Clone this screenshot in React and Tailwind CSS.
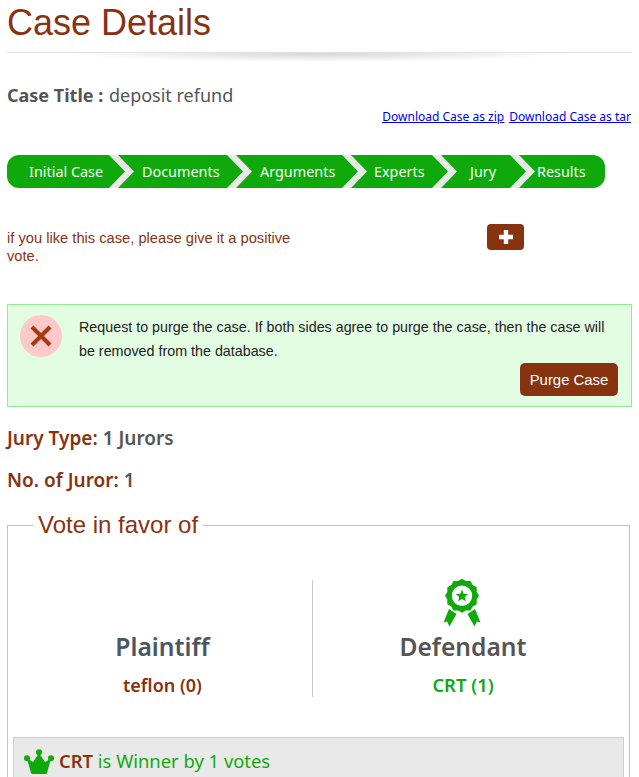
const steps = [
  { label: 'Initial Case', w: 'w-[102px]', pl: 'pl-[22px]' },
  { label: 'Documents', w: 'w-[93px]', pl: 'pl-[8px]' },
  { label: 'Arguments', w: 'w-[90px]', pl: 'pl-[8px]' },
  { label: 'Experts', w: 'w-[65px]', pl: 'pl-[7px]' },
  { label: 'Jury', w: 'w-[53px]', pl: 'pl-[13px]' },
  { label: 'Results', w: 'w-[70px]', pl: 'pl-[2px]' },
];

const Chevron = () => (
  <svg width="25" height="33" viewBox="0 0 25 33" className="block shrink-0">
    <polygon points="0,0 25,16.5 0,33" fill="#0fa90c" />
    <polygon points="0,0 9,0 25,16.5 9,33 0,33 16,16.5" fill="#e8e8e8" />
  </svg>
);

// scalloped rosette with a star and two ribbon tails
const scallop = Array.from({ length: 24 }, (_, i) => {
  const a = (i * Math.PI) / 12;
  const r = i % 2 ? 15.2 : 17;
  return `${(26 + r * Math.sin(a)).toFixed(1)},${(21.7 - r * Math.cos(a)).toFixed(1)}`;
}).join(' ');

const star = Array.from({ length: 10 }, (_, i) => {
  const a = (i * Math.PI) / 5;
  const r = i % 2 ? 2.9 : 6.4;
  return `${(26 + r * Math.sin(a)).toFixed(1)},${(22 - r * Math.cos(a)).toFixed(1)}`;
}).join(' ');

const Award = ({ className }) => (
  <svg width="54" height="60" viewBox="0 0 54 60" className={className}>
    <polygon points="13,35 20.500,40 13.500,52.500 11,47.500 7.500,48.500" fill="#0fa90c" />
    <polygon points="39,35 31.500,40 38.500,52.500 41,47.500 44.500,48.500" fill="#0fa90c" />
    <polygon points={scallop} fill="#0fa90c" />
    <circle cx="26" cy="21.7" r="10.2" fill="#fff" />
    <polygon points={star} fill="#0fa90c" />
  </svg>
);

const Crown = ({ className }) => (
  <svg width="30" height="26" viewBox="6 4 30 26" className={className}>
    <circle cx="9" cy="13.3" r="3" fill="#0fa90c" />
    <circle cx="21" cy="7.3" r="3" fill="#0fa90c" />
    <circle cx="33" cy="13.3" r="3" fill="#0fa90c" />
    <path d="M9 13.5l6 3.5 6-9 6 9 6-3.5-4 14.5q-.3 1-1.5 1H14.500q-1.200 0-1.500-1z" fill="#0fa90c" />
  </svg>
);

function Steps() {
  return (
    <div className="mt-[30px] ml-[7px] flex h-[33px] w-[598px] overflow-hidden rounded-[12px] bg-[#0fa90c] font-['Noto_Sans',sans-serif] text-[14.4px] text-[#f2fff2]">
      {steps.map((s, i) => (
        <div key={s.label} className="flex">
          <div className={`${s.w} ${s.pl} leading-[33px] whitespace-nowrap`}>{s.label}</div>
          {i < steps.length - 1 && <Chevron />}
        </div>
      ))}
    </div>
  );
}

export default function App() {
  return (
    <div className="h-[777px] w-[639px] overflow-hidden bg-white font-['Liberation_Sans',sans-serif] text-[#883310]">
      <h1 className="pt-[2px] pl-[7px] text-[36px] leading-[41px]">Case Details</h1>

      <div className="relative mx-[7px] mt-[9px] h-px bg-[#e2e2e2]">
        <div className="absolute top-px left-[60px] right-[60px] h-[9px] bg-[radial-gradient(ellipse_at_top,#d4d4d4,#ffffff_70%)]" />
      </div>

      <div className="mt-[30px] pl-[7px] font-['Noto_Sans',sans-serif] text-[18px] leading-[24px] text-[#555]">
        <b className="mr-px font-bold">Case Title :</b> deposit refund
      </div>

      <div className="mt-[2px] flex justify-end gap-[5px] pr-[8px] font-['Noto_Sans',sans-serif] text-[12px] leading-[16px] text-[#0000ee] underline">
        <a href="#">Download Case as zip</a>
        <a href="#">Download Case as tar</a>
      </div>

      <Steps />

      <div className="mt-[36px] flex pl-[7px]">
        <p className="mt-[5px] w-[300px] text-[14.7px] leading-[18px]">
          if you like this case, please give it a positive vote.
        </p>
        <button className="ml-[180px] flex h-[26px] w-[37px] items-center justify-center rounded-[4px] bg-[#883310]">
          <svg width="14" height="14" viewBox="0 0 14 14">
            <path d="M7 0v14M0 7h14" stroke="#fff" strokeWidth="4.4" />
          </svg>
        </button>
      </div>

      <div className="mt-[39px] ml-[7px] h-[103px] w-[625px] border border-[#90ee90] bg-[#e3fde3] pt-[10px] pr-[13px] pl-[12px]">
        <div className="flex">
          <div className="flex h-[42px] w-[42px] shrink-0 items-center justify-center rounded-full bg-[#ffc9c9]">
            <svg width="22" height="22" viewBox="0 0 22 22">
              <path d="M2 2l18 18M20 2L2 20" stroke="#a63a12" strokeWidth="4.2" />
            </svg>
          </div>
          <p className="ml-[17px] w-[535px] text-[14.3px] leading-[24px] text-[#222]">
            Request to purge the case. If both sides agree to purge the case, then the case will be removed from the database.
          </p>
        </div>
        <div className="flex justify-end">
          <button className="h-[33px] w-[98px] rounded-[5px] bg-[#883310] pt-px text-[14.9px] text-white">Purge Case</button>
        </div>
      </div>

      <div className="mt-[19px] pl-[7px] font-['Noto_Sans',sans-serif] text-[19px] leading-[24px] font-semibold text-[#555]">
        <span className="text-[#883310]">Jury Type:</span> 1 Jurors
      </div>
      <div className="mt-[18px] pl-[7px] font-['Noto_Sans',sans-serif] text-[19px] leading-[24px] font-semibold text-[#555]">
        <span className="text-[#883310]">No. of Juror:</span> 1
      </div>

      <fieldset className="mt-[19px] ml-[7px] h-[300px] w-[623px] border border-[#c0c0c0] px-[5px]">
        <legend className="ml-[20px] px-[5px] text-[24px] leading-[28px]">Vote in favor of</legend>

        <div className="mt-[41px] flex h-[117px] font-['Noto_Sans',sans-serif]">
          <div className="flex w-[300px] flex-col items-center border-r border-[#c8c8c8] pt-[49px]">
            <div className="text-[24.600px] leading-[36px] font-semibold text-[#4a5660]">Plaintiff</div>
            <div className="mt-[8px] text-[18px] leading-[24px] font-semibold text-[#883310]">teflon (0)</div>
          </div>
          <div className="relative flex w-[300px] flex-col items-center pt-[49px]">
            <Award className="absolute -top-[6px] left-[123px]" />
            <div className="text-[24.600px] leading-[36px] font-semibold text-[#555]">Defendant</div>
            <div className="mt-[8px] text-[18.400px] leading-[24px] font-semibold text-[#0fa90c]">CRT (1)</div>
          </div>
        </div>

        <div className="mt-[40px] flex h-[60px] w-[611px] border border-[#d0d0d0] bg-[#e9e9e9] pt-[8px] pl-[10px] font-['Noto_Sans',sans-serif] text-[18.400px] leading-[30px] text-[#0fa90c]">
          <Crown className="mt-[3px] mr-[5px]" />
          <span>
            <b className="font-semibold text-[#883310]">CRT</b> is Winner by 1 votes
          </span>
        </div>
      </fieldset>
    </div>
  );
}
